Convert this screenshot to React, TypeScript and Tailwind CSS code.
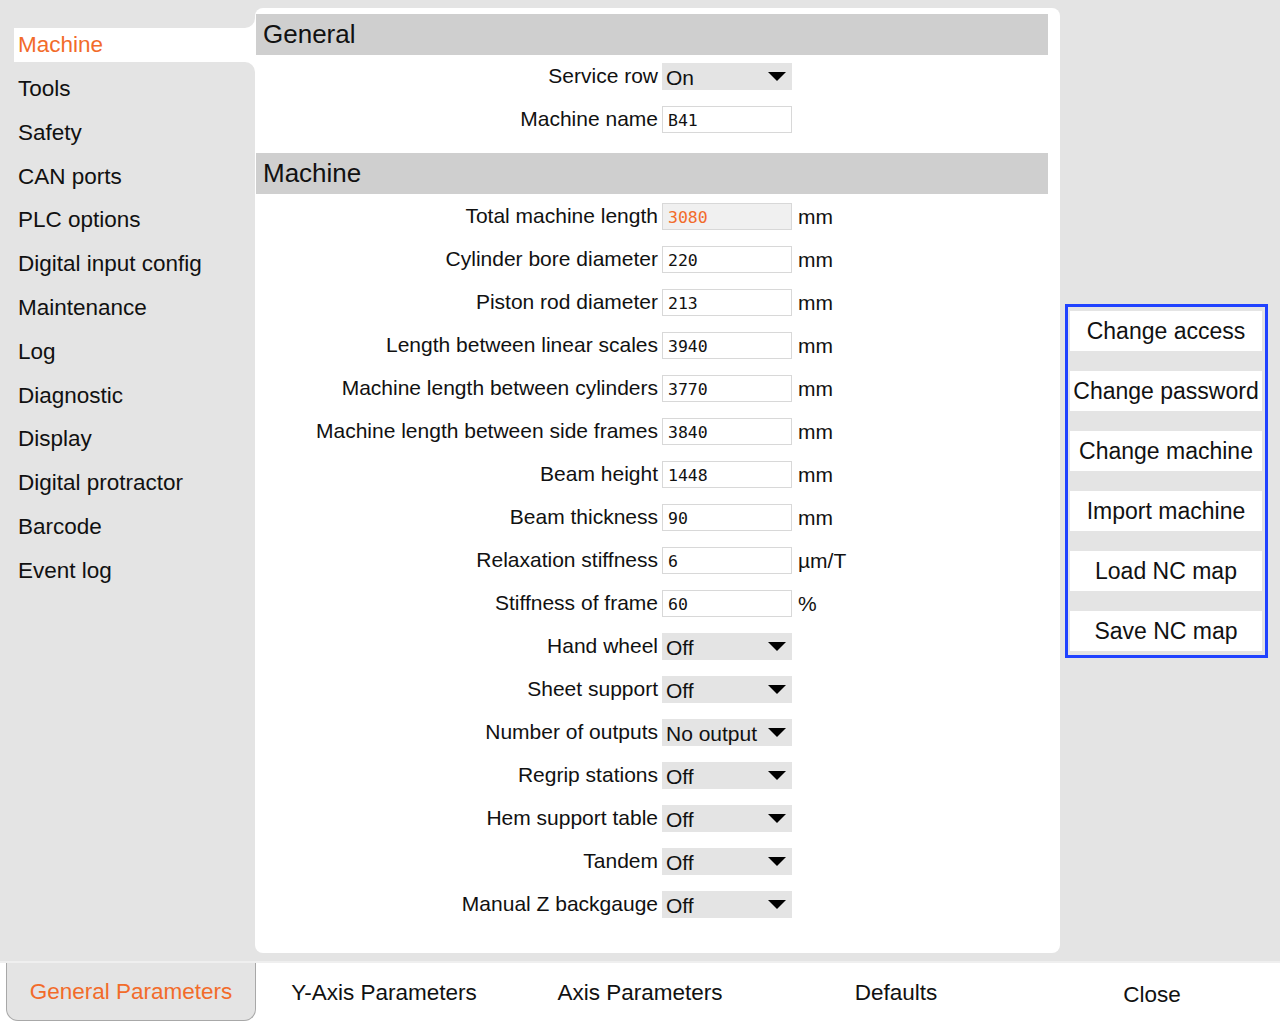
import React from "react";

const menu = [
  "Machine",
  "Tools",
  "Safety",
  "CAN ports",
  "PLC options",
  "Digital input config",
  "Maintenance",
  "Log",
  "Diagnostic",
  "Display",
  "Digital protractor",
  "Barcode",
  "Event log",
];

type Row =
  | { label: string; kind: "select"; value: string }
  | { label: string; kind: "input"; value: string; unit?: string; disabled?: boolean };

const generalRows: Row[] = [
  { label: "Service row", kind: "select", value: "On" },
  { label: "Machine name", kind: "input", value: "B41" },
];

const machineRows: Row[] = [
  { label: "Total machine length", kind: "input", value: "3080", unit: "mm", disabled: true },
  { label: "Cylinder bore diameter", kind: "input", value: "220", unit: "mm" },
  { label: "Piston rod diameter", kind: "input", value: "213", unit: "mm" },
  { label: "Length between linear scales", kind: "input", value: "3940", unit: "mm" },
  { label: "Machine length between cylinders", kind: "input", value: "3770", unit: "mm" },
  { label: "Machine length between side frames", kind: "input", value: "3840", unit: "mm" },
  { label: "Beam height", kind: "input", value: "1448", unit: "mm" },
  { label: "Beam thickness", kind: "input", value: "90", unit: "mm" },
  { label: "Relaxation stiffness", kind: "input", value: "6", unit: "µm/T" },
  { label: "Stiffness of frame", kind: "input", value: "60", unit: "%" },
  { label: "Hand wheel", kind: "select", value: "Off" },
  { label: "Sheet support", kind: "select", value: "Off" },
  { label: "Number of outputs", kind: "select", value: "No output" },
  { label: "Regrip stations", kind: "select", value: "Off" },
  { label: "Hem support table", kind: "select", value: "Off" },
  { label: "Tandem", kind: "select", value: "Off" },
  { label: "Manual Z backgauge", kind: "select", value: "Off" },
];

const actions = [
  "Change access",
  "Change password",
  "Change machine",
  "Import machine",
  "Load NC map",
  "Save NC map",
];

const tabs = ["General Parameters", "Y-Axis Parameters", "Axis Parameters", "Defaults", "Close"];

function Caret() {
  return (
    <svg width="18" height="10" viewBox="0 0 18 10" className="shrink-0">
      <polygon points="0,0 18,0 9,9" fill="#000" />
    </svg>
  );
}

function FieldRow({ row }: { row: Row }) {
  return (
    <div className="flex items-center h-[27px]">
      <div className="w-[403px] text-right text-[21px] leading-none pb-[2px] text-[#111] whitespace-nowrap">
        {row.label}
      </div>
      {row.kind === "select" ? (
        <div className="ml-[4px] w-[130px] h-[27px] bg-[#e4e4e4] flex items-center justify-between pl-[4px] pr-[6px]">
          <span className="text-[21px] leading-none pt-[2px] text-[#111] whitespace-nowrap">{row.value}</span>
          <Caret />
        </div>
      ) : (
        <>
          <div
            className={`ml-[4px] w-[130px] h-[27px] border border-[#d8d8d8] flex items-center pl-[5px] pt-[3px] font-['DejaVu_Sans_Mono',monospace] text-[16.5px] ${
              row.disabled ? "bg-[#f0f0f0] text-[#f26b2a]" : "bg-white text-[#111]"
            }`}
          >
            {row.value}
          </div>
          {row.unit && <div className="ml-[6px] text-[21px] leading-none pb-[1px] text-[#111]">{row.unit}</div>}
        </>
      )}
    </div>
  );
}

function SectionHeader({ title }: { title: string }) {
  return (
    <div className="ml-px mr-[12px] h-[41px] bg-[#cfcfcf] flex items-center pl-[7px] text-[26px] text-[#111]">
      {title}
    </div>
  );
}

export default function App() {
  return (
    <div className="w-[1280px] h-[1024px] flex flex-col bg-[#e4e4e4] font-['Liberation_Sans',sans-serif] overflow-hidden">
      <div className="flex h-[961px]">
        {/* side menu */}
        <div className="w-[255px] shrink-0 pt-[28px] pl-[14px] flex flex-col gap-[9.8px]">
          {menu.map((m, i) =>
            i === 0 ? (
              <div key={m} className="relative h-[34px] bg-white flex items-center pl-[4px] text-[22.5px] text-[#f26b2a]">
                {m}
                <div className="absolute right-0 -top-[10px] w-[10px] h-[10px] bg-white">
                  <div className="w-full h-full bg-[#e4e4e4] rounded-br-[10px]" />
                </div>
                <div className="absolute right-0 -bottom-[10px] w-[10px] h-[10px] bg-white">
                  <div className="w-full h-full bg-[#e4e4e4] rounded-tr-[10px]" />
                </div>
              </div>
            ) : (
              <div key={m} className="h-[34px] flex items-center pl-[4px] text-[22.5px] text-[#111]">
                {m}
              </div>
            )
          )}
        </div>

        {/* settings panel */}
        <div className="w-[805px] shrink-0 mt-[8px] h-[945px] bg-white rounded-[8px] pt-[6px]">
          <SectionHeader title="General" />
          <div className="flex flex-col gap-[16px] mt-[8px] mb-[20px]">
            {generalRows.map((r) => (
              <FieldRow key={r.label} row={r} />
            ))}
          </div>
          <SectionHeader title="Machine" />
          <div className="flex flex-col gap-[16px] mt-[9px]">
            {machineRows.map((r) => (
              <FieldRow key={r.label} row={r} />
            ))}
          </div>
        </div>

        {/* actions */}
        <div className="flex-1 pl-[5px] pt-[304px]">
          <div className="w-[203px] border-[3px] border-[#2042ff] pt-[4px] pb-[4px] pl-[2px] pr-[3px] flex flex-col gap-[20px]">
            {actions.map((a) => (
              <div key={a} className="h-[40px] bg-white flex items-center justify-center text-[23px] text-[#111] whitespace-nowrap">
                {a}
              </div>
            ))}
          </div>
        </div>
      </div>

      {/* bottom tabs */}
      <div className="h-[63px] bg-white border-t-2 border-[#efefef] grid grid-cols-5">
        {tabs.map((t, i) =>
          i === 0 ? (
            <div key={t} className="pl-[6px]">
              <div className="w-[250px] h-[58px] bg-[#e4e4e4] border border-t-0 border-[#a8a8a8] rounded-b-[12px] flex items-center justify-center text-[22.5px] text-[#f26b2a]">
                {t}
              </div>
            </div>
          ) : (
            <div
              key={t}
              className={`flex justify-center text-[22.5px] text-[#111] ${i === 4 ? "pt-[15px]" : "pt-[13px]"}`}
            >
              {t}
            </div>
          )
        )}
      </div>
    </div>
  );
}
